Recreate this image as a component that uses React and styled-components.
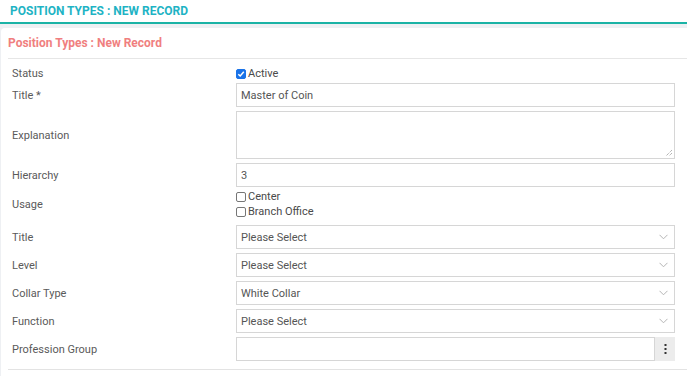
import React from 'react';
import styled, { createGlobalStyle } from 'styled-components';

const GlobalStyle = createGlobalStyle`
  html, body {
    margin: 0;
    padding: 0;
    background: #eef0f3;
    font-family: Roboto, "Open Sans", Arial, sans-serif;
  }
`;

const TopBar = styled.header`
  height: 22px;
  background: #fff;
  border-bottom: 2px solid #1bb3a6;
  display: flex;
  align-items: center;
  padding-left: 10px;
`;

const PageTitle = styled.h1`
  margin: 0;
  font-size: 12px;
  font-weight: 700;
  color: #1eb3c4;
  text-transform: uppercase;
`;

const Panel = styled.section`
  margin: 4px 0 0 1px;
  background: #fff;
  border-radius: 4px 0 0 0;
  padding-left: 7px;
  min-height: 348px;
`;

const PanelTitle = styled.h2`
  margin: 0;
  height: 30px;
  display: flex;
  align-items: center;
  font-size: 12px;
  font-weight: 700;
  color: #f07f7f;
  border-bottom: 1px solid #e6e6e6;
`;

const Form = styled.div`
  display: flex;
  flex-direction: column;
  gap: 4px;
  padding: 5px 12px 8px 4px;
  border-bottom: 1px solid #e3e3e3;
`;

const Row = styled.div`
  display: grid;
  grid-template-columns: 224px 1fr;
  align-items: center;
  margin: ${(p) => p.$margin || '0'};
`;

const Label = styled.label`
  font-size: 11px;
  color: #5a5a5a;
`;

const Checks = styled.div`
  display: flex;
  flex-direction: column;
`;

const CheckLine = styled.label`
  display: flex;
  align-items: center;
  gap: 2px;
  height: 15px;
  font-size: 11px;
  color: #4a4a4a;
`;

const Box = styled.span`
  width: 10px;
  height: 10px;
  box-sizing: border-box;
  border-radius: 2px;
  border: 1px solid ${(p) => (p.$checked ? '#1a73e8' : '#767676')};
  background: ${(p) => (p.$checked ? '#1a73e8' : '#fff')};
  display: inline-flex;
  align-items: center;
  justify-content: center;
`;

const Field = styled.div`
  height: ${(p) => p.$height || 24}px;
  box-sizing: border-box;
  border: 1px solid #d6d6d6;
  display: flex;
  align-items: ${(p) => (p.$area ? 'flex-end' : 'center')};
  justify-content: space-between;
  padding-left: 4px;
  font-size: 11px;
  color: #555;
`;

const Arrow = styled.span`
  display: inline-flex;
  padding-right: 6px;
`;

const Grip = styled.span`
  display: inline-flex;
  padding: 0 1px 1px 0;
  margin-left: auto;
`;

const LookupButton = styled.span`
  width: 20px;
  align-self: stretch;
  margin: -1px -1px -1px 0;
  background: #ececec;
  border-left: 1px solid #d6d6d6;
  display: flex;
  align-items: center;
  justify-content: center;
`;

const Check = ({ checked, children }) => (
  <CheckLine>
    <Box $checked={checked}>
      {checked && (
        <svg width="8" height="8" viewBox="0 0 8 8">
          <path d="M1.3 4.2 L3.2 6 L6.8 1.8" stroke="#fff" strokeWidth="1.5" fill="none" />
        </svg>
      )}
    </Box>
    {children}
  </CheckLine>
);

const Select = ({ value }) => (
  <Field>
    {value}
    <Arrow>
      <svg width="9" height="6" viewBox="0 0 9 6">
        <path d="M0.5 0.8 L4.5 4.8 L8.5 0.8" stroke="#b5b5b5" strokeWidth="1" fill="none" />
      </svg>
    </Arrow>
  </Field>
);

const selects = [
  ['Title', 'Please Select'],
  ['Level', 'Please Select'],
  ['Collar Type', 'White Collar'],
  ['Function', 'Please Select'],
];

export default function App() {
  return (
    <>
      <GlobalStyle />
      <TopBar>
        <PageTitle>Position Types : New Record</PageTitle>
      </TopBar>
      <Panel>
        <PanelTitle>Position Types : New Record</PanelTitle>
        <Form>
          <Row $margin="2px 0 -2px">
            <Label>Status</Label>
            <Check checked>Active</Check>
          </Row>
          <Row>
            <Label>Title *</Label>
            <Field>Master of Coin</Field>
          </Row>
          <Row>
            <Label>Explanation</Label>
            <Field $height={48} $area>
              <Grip>
                <svg width="8" height="8" viewBox="0 0 8 8">
                  <path d="M7 1 L1 7 M7 4 L4 7" stroke="#777" strokeWidth="0.8" strokeDasharray="1 1" />
                </svg>
              </Grip>
            </Field>
          </Row>
          <Row>
            <Label>Hierarchy</Label>
            <Field>3</Field>
          </Row>
          <Row $margin="-2px 0 2px">
            <Label>Usage</Label>
            <Checks>
              <Check>Center</Check>
              <Check>Branch Office</Check>
            </Checks>
          </Row>
          {selects.map(([label, value]) => (
            <Row key={label}>
              <Label>{label}</Label>
              <Select value={value} />
            </Row>
          ))}
          <Row>
            <Label>Profession Group</Label>
            <Field>
              <span />
              <LookupButton>
                <svg width="3" height="10" viewBox="0 0 3 10">
                  <rect x="0.5" y="0" width="2" height="2" fill="#333" />
                  <rect x="0.5" y="4" width="2" height="2" fill="#333" />
                  <rect x="0.5" y="8" width="2" height="2" fill="#333" />
                </svg>
              </LookupButton>
            </Field>
          </Row>
        </Form>
      </Panel>
    </>
  );
}
